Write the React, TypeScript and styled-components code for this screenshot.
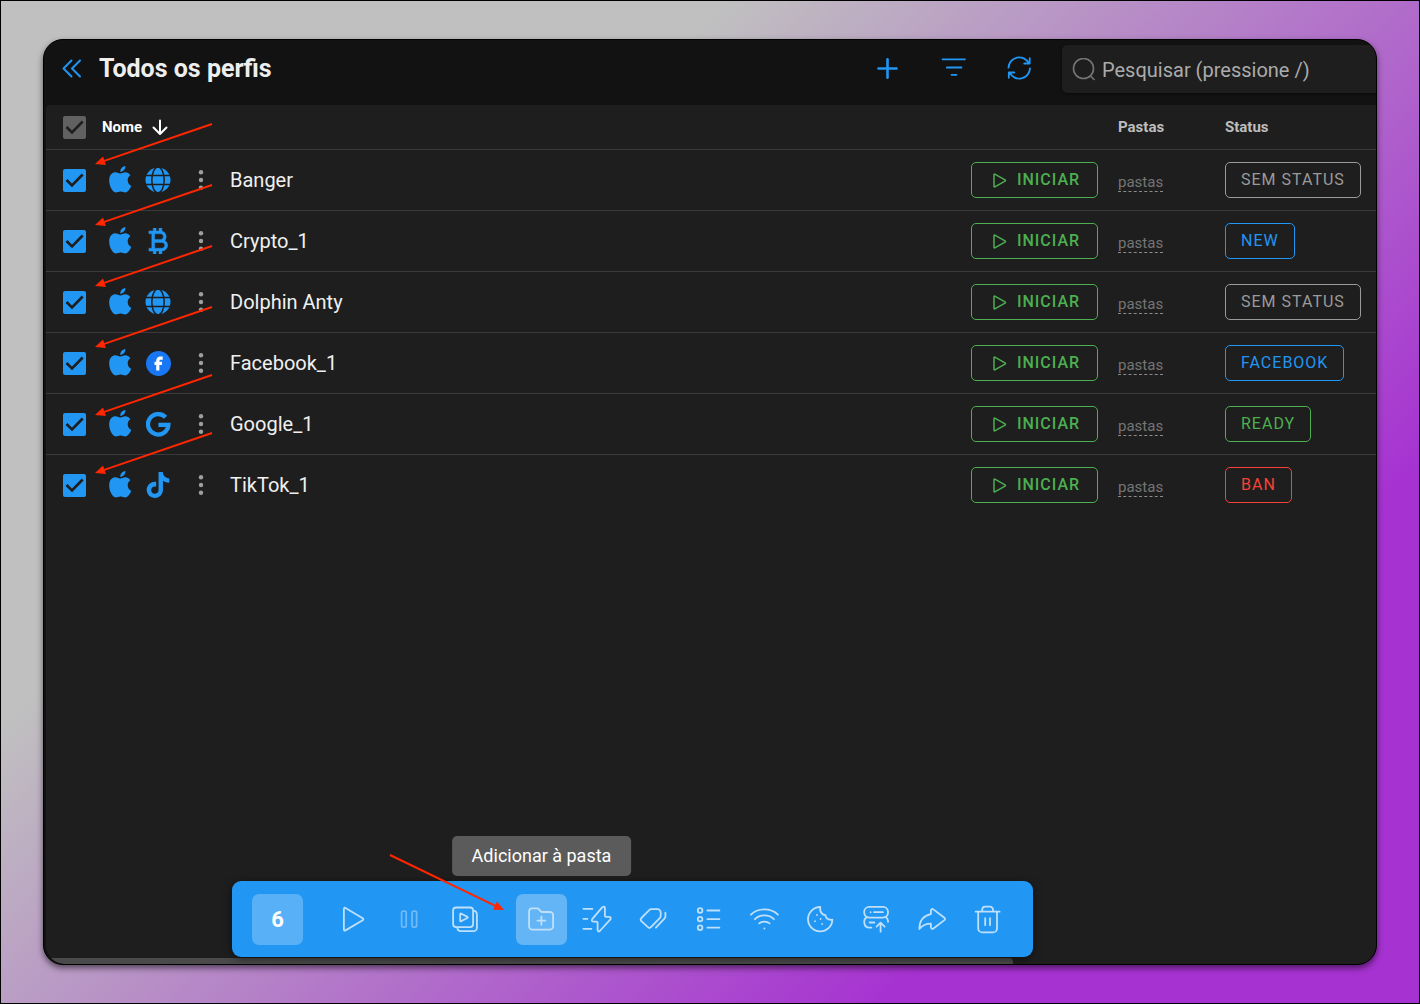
import React from "react";
import styled, { createGlobalStyle, css } from "styled-components";
import { SiTiktok } from "react-icons/si";

const BLUE = "#2196f3";
const GREEN = "#4caf50";
const RED = "#f44336";
const GREY = "#9a9a9a";
const SURFACE = "#1e1e1e";

const GlobalStyle = createGlobalStyle`
  * { box-sizing: border-box; }
  body {
    margin: 0;
    font-family: Roboto, "Liberation Sans", sans-serif;
    color: #f5f5f5;
  }
  button, input { font-family: inherit; }
`;

const Page = styled.div`
  display: flex;
  min-height: 100vh;
  padding: 38px 42px;
  border: 1px solid #000;
  background: linear-gradient(135deg, #c0c0c0 30%, #a632d1 78%);
`;

const Window = styled.main`
  position: relative;
  display: flex;
  flex-direction: column;
  flex: 1;
  min-width: 0;
  overflow: hidden;
  border: 1px solid #000;
  border-radius: 20px;
  background: #121212;
  box-shadow: 0 3px 6px rgba(0, 0, 0, 0.55);
`;

const Header = styled.header`
  display: flex;
  align-items: center;
  padding: 5px 0 12px 16px;
`;

const IconButton = styled.button`
  display: grid;
  place-items: center;
  width: 26px;
  height: 26px;
  padding: 0;
  border: 0;
  background: none;
  color: ${BLUE};
  cursor: pointer;
`;

const Title = styled.h1`
  flex: 1;
  margin: 0 0 0 13px;
  font-size: 25px;
  line-height: 30px;
  font-weight: 700;
  color: #eeeeee;
`;

const HeaderActions = styled.div`
  display: flex;
  gap: 40px;
  margin-right: 30px;
`;

const SearchField = styled.label`
  display: flex;
  align-items: center;
  gap: 7px;
  width: 314px;
  height: 48px;
  padding-left: 10px;
  border-radius: 5px 0 0 5px;
  background: ${SURFACE};
  color: #757575;
  box-shadow: 0 1px 3px rgba(0, 0, 0, 0.5);
`;

const SearchInput = styled.input`
  flex: 1;
  min-width: 0;
  padding: 2px 0 0;
  border: 0;
  outline: 0;
  background: none;
  color: #fff;
  font-size: 20px;
  line-height: 24px;
  &::placeholder { color: #ababab; opacity: 1; }
`;

const Content = styled.section`
  display: flex;
  flex-direction: column;
  justify-content: space-between;
  flex: 1;
  margin-left: 2px;
  border-radius: 4px 0 19px 19px;
  overflow: hidden;
  background: ${SURFACE};
`;

const Table = styled.table`
  width: 100%;
  table-layout: fixed;
  border-spacing: 0;
`;

const Col = styled.col<{ $w?: number }>`
  width: ${(p) => (p.$w ? `${p.$w}px` : "auto")};
`;

const HeadCell = styled.th<{ $strong?: boolean }>`
  height: 44px;
  padding: 0;
  text-align: left;
  font-size: 15px;
  line-height: 20px;
  font-weight: 700;
  color: ${(p) => (p.$strong ? "#ffffff" : "#bdbdbd")};
`;

const SortButton = styled.button`
  display: flex;
  align-items: center;
  gap: 9px;
  padding: 0;
  border: 0;
  background: none;
  color: inherit;
  font-size: inherit;
  font-weight: inherit;
`;

const Cell = styled.td`
  height: 61px;
  padding: 0;
  border-top: 1px solid #3a3a3a;
`;

const CheckLabel = styled.label`
  display: grid;
  width: 23px;
  margin-left: 17px;
  & > * { grid-area: 1 / 1; }
`;

const CheckInput = styled.input<{ $muted?: boolean }>`
  appearance: none;
  width: 23px;
  height: 23px;
  margin: 0;
  border-radius: 2px;
  background: ${(p) => (p.$muted ? "#616161" : BLUE)};
`;

const Profile = styled.div`
  display: flex;
  align-items: center;
  padding-left: 5px;
`;

const Brands = styled.div`
  display: flex;
  gap: 12px;
  margin-right: 17px;
  color: ${BLUE};
`;

const BrandBox = styled.span`
  display: grid;
  place-items: center;
  width: 26px;
  height: 30px;
`;

const MenuButton = styled(IconButton)`
  color: #9e9e9e;
`;

const ProfileName = styled.span`
  margin-left: 16px;
  font-size: 20px;
  line-height: 24px;
  color: #f0f0f0;
`;

const outlined = css`
  height: 36px;
  border: 1px solid currentColor;
  border-radius: 5px;
  background: none;
  font-size: 16px;
  line-height: 20px;
  letter-spacing: 1px;
  cursor: pointer;
`;

const StartButton = styled.button`
  ${outlined}
  display: flex;
  align-items: center;
  justify-content: center;
  gap: 10px;
  width: 127px;
  padding: 0 0 0 3px;
  font-weight: 500;
  color: ${GREEN};
`;

const StatusButton = styled.button<{ $color: string }>`
  ${outlined}
  padding: 0 15px;
  white-space: nowrap;
  color: ${(p) => p.$color};
`;

const FolderLink = styled.a`
  display: inline-block;
  margin-top: 4px;
  border-bottom: 1px dashed #8a8a8a;
  font-size: 15px;
  line-height: 18px;
  color: #757575;
  text-decoration: none;
`;

const ScrollThumb = styled.div`
  width: 967px;
  max-width: 73%;
  height: 6px;
  border-radius: 0 4px 0 0;
  background: #4a4a4a;
`;

const BulkBar = styled.div`
  position: absolute;
  left: 188px;
  bottom: 7px;
  display: flex;
  gap: 25px;
  padding: 13px 18px 12px 20px;
  border-radius: 9px;
  background: ${BLUE};
  box-shadow: 0 2px 8px rgba(0, 0, 0, 0.5);
`;

const Count = styled.output`
  display: grid;
  place-items: center;
  width: 51px;
  height: 51px;
  border-radius: 7px;
  background: rgba(255, 255, 255, 0.25);
  color: #fff;
  font-size: 22px;
  line-height: 26px;
  font-weight: 700;
`;

const BulkGroup = styled.div`
  display: flex;
  gap: 5px;
`;

const BulkButton = styled.button<{ $active?: boolean; $dim?: boolean }>`
  position: relative;
  display: grid;
  place-items: center;
  width: 51px;
  height: 51px;
  padding: 0;
  border: 0;
  border-radius: 7px;
  background: ${(p) => (p.$active ? "rgba(255, 255, 255, 0.3)" : "none")};
  color: ${(p) => (p.$dim ? "#6fbaf7" : "#bfe0fb")};
`;

const Tooltip = styled.span`
  position: absolute;
  left: 50%;
  bottom: calc(100% + 18px);
  transform: translateX(-50%);
  padding: 9px 20px;
  border-radius: 5px;
  background: #5b5b5b;
  color: #fff;
  font-size: 18px;
  line-height: 22px;
  white-space: nowrap;
`;

const Annotations = styled.svg`
  position: absolute;
  left: -44px;
  top: -40px;
  pointer-events: none;
`;

const Tick = () => (
  <svg width="23" height="23" viewBox="0 0 23 23" fill="none" stroke={SURFACE} strokeWidth="2.6" pointerEvents="none">
    <path d="M3.500 11 9 16.500 19.700 5.500" />
  </svg>
);

const Check = ({ label, muted }: { label: string; muted?: boolean }) => (
  <CheckLabel>
    <CheckInput type="checkbox" defaultChecked aria-label={label} $muted={muted} />
    <Tick />
  </CheckLabel>
);

const Apple = () => (
  <svg width="23" height="29" viewBox="0 0 23 29" fill={BLUE}>
    <path d="M11.300 7.600C9.500 7.400 8 6.200 6 6.300 2.500 6.600.2 9.800.2 14.500.2 19.500 3.200 26.200 6.800 26.400 8.600 26.400 9.400 25.400 11.600 25.400S14.600 26.400 16.200 26.400C19 26.300 21.300 22.600 22.300 19.800 17.800 17.800 17.600 11.500 21.400 9.200 20.200 7.400 18.200 6.300 16.200 6.300 14.200 6.300 12.800 7.600 11.300 7.600z" />
    <path d="M11.300 5.900C11 3 13.300.3 16.400 0 16.600 3 14.300 5.800 11.300 5.900z" />
  </svg>
);

const Globe = () => (
  <svg width="26" height="26" viewBox="0 0 26 26">
    <circle cx="13" cy="13" r="12.5" fill={BLUE} />
    <g fill="none" stroke={SURFACE} strokeWidth="1.5">
      <path d="M0 8.600H26M0 17.400H26" />
      <ellipse cx="13" cy="13" rx="6.2" ry="13" />
    </g>
  </svg>
);

const Bitcoin = () => (
  <svg width="20" height="26" viewBox="5.4 3 13.8 18" fill={BLUE} stroke={BLUE} strokeWidth="0.3">
    <path d="M17.060 11.570c.59-.69.94-1.590.94-2.570 0-1.860-1.270-3.430-3-3.870V3h-2v2h-2V3H9v2H6v2h2v10H6v2h3v2h2v-2h2v2h2v-2c2.210 0 4-1.790 4-4 0-1.450-.78-2.730-1.940-3.430zM10 7h4c1.100 0 2 .9 2 2s-.9 2-2 2h-4V7zm5 10h-5v-4h5c1.100 0 2 .9 2 2s-.9 2-2 2z" />
  </svg>
);

const Facebook = () => (
  <svg width="25" height="25" viewBox="0 0 25 25" fill="none">
    <circle cx="12.5" cy="12.5" r="12.5" fill="#1877f2" />
    <path d="M11.800 19.500V10.200q0-3 2.800-3H16.700M8.500 12.300H16" stroke="#fff" strokeWidth="3.2" />
  </svg>
);

const Google = () => (
  <svg width="25" height="25" viewBox="0 0 25 25" fill="none" stroke={BLUE} strokeWidth="4.3">
    <path d="M19.600 5.300A10.200 10.200 0 1 0 22.400 12.900H12.400" />
  </svg>
);

const LineIcon = ({ size = 26, stroke = 1.8, children }: { size?: number; stroke?: number; children: React.ReactNode }) => (
  <svg
    width={size}
    height={size}
    viewBox={`0 0 ${size} ${size}`}
    fill="none"
    stroke="currentColor"
    strokeWidth={stroke}
    strokeLinecap="round"
    strokeLinejoin="round"
  >
    {children}
  </svg>
);

const BulkIcon = ({ children }: { children: React.ReactNode }) => (
  <svg
    width="32"
    height="32"
    viewBox="0.6 0.8 32 32"
    fill="none"
    stroke="currentColor"
    strokeWidth="1.8"
    strokeLinecap="round"
    strokeLinejoin="round"
  >
    {children}
  </svg>
);

type Row = { name: string; site: React.ReactNode; status: string; color: string };

const rows: Row[] = [
  { name: "Banger", site: <Globe />, status: "SEM STATUS", color: GREY },
  { name: "Crypto_1", site: <Bitcoin />, status: "NEW", color: BLUE },
  { name: "Dolphin Anty", site: <Globe />, status: "SEM STATUS", color: GREY },
  { name: "Facebook_1", site: <Facebook />, status: "FACEBOOK", color: BLUE },
  { name: "Google_1", site: <Google />, status: "READY", color: GREEN },
  { name: "TikTok_1", site: <SiTiktok size={26} />, status: "BAN", color: RED },
];

const runIcons = [
  { label: "Iniciar", icon: <path d="M6.500 5.600V26.400q.2 1.600 1.600 .8L25.300 17q1.200-1 0-2L8.100 4.800q-1.400-.8-1.600 .8z" /> },
  {
    label: "Parar",
    dim: true,
    icon: (
      <>
        <rect x="8.200" y="8" width="4.600" height="16" rx="1.600" />
        <rect x="18.600" y="8" width="4.600" height="16" rx="1.600" />
      </>
    ),
  },
  {
    label: "Cenários",
    icon: (
      <>
        <rect x="3.700" y="4.300" width="20" height="19.600" rx="3" />
        <path d="M10.800 10.700V17.700q.1.700.8.400L18 14.800q.7-.6 0-1.100L11.600 10.300q-.7-.2-.8.400z" />
        <path d="M24 7.500c2 .3 3.500 1.500 3.500 4V24.500a3.500 3.500 0 0 1-3.500 3.500H11.500c-2.500 0-3.400-1.500-3.600-3.800" />
      </>
    ),
  },
];

const editIcons = [
  {
    label: "Adicionar à pasta",
    active: true,
    icon: (
      <path d="M6.700 5.200h5q1 0 1.700.8l1.900 2.200q.6.600 1.400.600h8a3 3 0 0 1 3 3V23.400a3 3 0 0 1-3 3H6.700a3 3 0 0 1-3-3V8.200a3 3 0 0 1 3-3zM16 13.500v8M12 17.500h8" />
    ),
  },
  {
    label: "Ações rápidas",
    icon: (
      <>
        <path d="M2 5.600H11M2 15.600H6M2 25.600H10" />
        <path d="M21 4 10.800 16q-1 2 1 2.400h3.200q1.200.1 1.200 1.200V27q.4 2.200 2.200.8L29 16.200q1-2-1-2.500h-3.300q-1.200 0-1.200-1.200V4.600q-.4-2-2.500-.6z" />
      </>
    ),
  },
  {
    label: "Etiquetas",
    icon: (
      <path d="M14 6H20a3.300 3.300 0 0 1 3.300 3.300V12.500q0 1.500-1 2.500L13.500 24q-1.500 1.500-3 0L4 18q-1.500-1.500 0-3.200L11.800 7q.8-1 2.200-1zM28 9.500V13q0 1.500-1 2.500L18.500 24.500" />
    ),
  },
  {
    label: "Status",
    icon: (
      <>
        <circle cx="6.700" cy="7.300" r="2.300" />
        <circle cx="6.700" cy="15.900" r="2.300" />
        <circle cx="6.700" cy="24.500" r="2.300" />
        <path d="M14 7.300H26M14 15.900H26M14 24.500H26" />
      </>
    ),
  },
  {
    label: "Proxy",
    icon: <path d="M1.500 11.500C8.500 4.500 21.500 4.500 28.500 11.500M5.500 16C10.500 11 19.500 11 24.500 16M9.800 20.200C12.500 17.800 17.500 17.800 20.200 20.200M15 25.300v.1" />,
  },
  {
    label: "Cookies",
    icon: (
      <path d="M14.800 3.800c-.4 4.200 1.400 7.500 5.200 8.200 .6 3.400 3 5 7 4.500A12.200 12.200 0 1 1 14.800 3.800zM11.500 11.800v.1M9.600 18v.1M15.200 15.700v.1M16.700 20.800v.1" />
    ),
  },
  {
    label: "Atualizar proxy",
    icon: (
      <>
        <rect x="2.800" y="3.600" width="23.800" height="10.800" rx="5" />
        <path d="M9.200 9v.1M12.600 9H21.500M5 14.400C1.500 16.800 2.200 24.500 8 24.500H10M8.200 19.300H13M25 14.400q1.600 1.500 1.700 4.300M19.200 28.500V20.500M15.200 23.500l4-4 4 4" />
      </>
    ),
  },
  {
    label: "Compartilhar",
    icon: (
      <path d="M13.500 11V7.500q.5-2.500 2.500-1.300L27 14.500q1.200 1.200 0 2.400L16 25.300q-2 1.200-2.500-1.200V20.500C9 20.500 5 22 2 25.800 2 18 6 12.500 13.500 11z" />
    ),
  },
  {
    label: "Excluir",
    icon: (
      <path d="M2.200 8.500H26.200M8.800 8.500V6.500a3 3 0 0 1 3-3h4.800a3 3 0 0 1 3 3V8.500M4.800 8.500V25.200a4 4 0 0 0 4 4H19.600a4 4 0 0 0 4-4V8.500M11.800 15V22M16.600 15V22" />
    ),
  },
];

/* [tailX, tailY, tipX, tipY] */
const arrows = [
  [212, 124, 95, 164],
  [212, 185, 95, 225],
  [212, 246, 95, 286],
  [212, 307, 95, 347],
  [212, 375, 95, 415],
  [212, 433, 95, 473],
  [390, 855, 504, 910],
];

const Arrow = ({ pts }: { pts: number[] }) => {
  const [x1, y1, x2, y2] = pts;
  const angle = (Math.atan2(y2 - y1, x2 - x1) * 180) / Math.PI;
  const len = Math.hypot(x2 - x1, y2 - y1);
  return (
    <g transform={`translate(${x2} ${y2}) rotate(${angle})`}>
      <path d={`M${-len} 0H-9`} stroke="#ff2600" strokeWidth="2" />
      <path d="M0 0-10-4.500V4.500z" fill="#ff2600" />
    </g>
  );
};

export default function App() {
  return (
    <Page>
      <GlobalStyle />
      <Window>
        <Header>
          <IconButton aria-label="Recolher">
            <LineIcon stroke={2}>
              <path d="M11.500 4.500 3.500 12.500l8 8M20 4.500 12 12.500l8 8" />
            </LineIcon>
          </IconButton>
          <Title>Todos os perfis</Title>
          <HeaderActions>
            <IconButton aria-label="Criar perfil">
              <LineIcon stroke={2.6}>
                <path d="M13.500 3.300V21.700M4.500 12.500H22.500" />
              </LineIcon>
            </IconButton>
            <IconButton aria-label="Filtrar">
              <LineIcon>
                <path d="M2.500 3.300H25M6.800 11.500H21.500M11.500 18.800H16.500" />
              </LineIcon>
            </IconButton>
            <IconButton aria-label="Atualizar">
              <LineIcon>
                <path d="M2.500 11.600A10.700 10.700 0 0 1 22.700 7.200M24 12.400A10.700 10.700 0 0 1 3.800 16.800M23.700 2.200V7.500H18.200M2.800 21.800V16.500H8.300" />
              </LineIcon>
            </IconButton>
          </HeaderActions>
          <SearchField>
            <LineIcon size={23} stroke={1.6}>
              <path d="M21.500 10.500A10 10 0 1 1 1.500 10.500 10 10 0 1 1 21.500 10.500M18.800 18.300 22 21.500" />
            </LineIcon>
            <SearchInput type="search" placeholder="Pesquisar (pressione /)" aria-label="Pesquisar" />
          </SearchField>
        </Header>

        <Content>
          <Table>
            <colgroup>
              <Col $w={56} />
              <Col />
              <Col $w={147} />
              <Col $w={107} />
              <Col $w={151} />
            </colgroup>
            <thead>
              <tr>
                <HeadCell>
                  <Check label="Selecionar todos" muted />
                </HeadCell>
                <HeadCell $strong>
                  <SortButton>
                    Nome
                    <LineIcon size={18} stroke={2}>
                      <path d="M9 2.500V15.500M2.500 9.500 9 16l6.500-6.500" />
                    </LineIcon>
                  </SortButton>
                </HeadCell>
                <HeadCell />
                <HeadCell>Pastas</HeadCell>
                <HeadCell>Status</HeadCell>
              </tr>
            </thead>
            <tbody>
              {rows.map((row) => (
                <tr key={row.name}>
                  <Cell>
                    <Check label={`Selecionar ${row.name}`} />
                  </Cell>
                  <Cell>
                    <Profile>
                      <Brands>
                        <BrandBox>
                          <Apple />
                        </BrandBox>
                        <BrandBox>{row.site}</BrandBox>
                      </Brands>
                      <MenuButton aria-label={`Opções de ${row.name}`}>
                        <svg width="6" height="22" viewBox="0 0 6 22" fill="currentColor">
                          <circle cx="3" cy="3.200" r="2.200" />
                          <circle cx="3" cy="11" r="2.200" />
                          <circle cx="3" cy="18.800" r="2.200" />
                        </svg>
                      </MenuButton>
                      <ProfileName>{row.name}</ProfileName>
                    </Profile>
                  </Cell>
                  <Cell>
                    <StartButton>
                      <LineIcon size={15} stroke={1.5}>
                        <path d="M2 1.500V13.500q.1.700.8.400L13 8.200q.9-.7 0-1.400L2.800 1.100q-.7-.3-.8.400z" />
                      </LineIcon>
                      INICIAR
                    </StartButton>
                  </Cell>
                  <Cell>
                    <FolderLink href="#pastas">pastas</FolderLink>
                  </Cell>
                  <Cell>
                    <StatusButton $color={row.color}>{row.status}</StatusButton>
                  </Cell>
                </tr>
              ))}
            </tbody>
          </Table>
          <ScrollThumb />
        </Content>

        <BulkBar role="toolbar" aria-label="Ações em massa">
          <Count>6</Count>
          <BulkGroup>
            {runIcons.map((item) => (
              <BulkButton key={item.label} aria-label={item.label} $dim={item.dim}>
                <BulkIcon>{item.icon}</BulkIcon>
              </BulkButton>
            ))}
          </BulkGroup>
          <BulkGroup>
            {editIcons.map((item) => (
              <BulkButton key={item.label} aria-label={item.label} $active={item.active}>
                <BulkIcon>{item.icon}</BulkIcon>
                {item.active && <Tooltip role="tooltip">{item.label}</Tooltip>}
              </BulkButton>
            ))}
          </BulkGroup>
        </BulkBar>

        <Annotations width="520" height="930" viewBox="0 0 520 930" aria-hidden="true">
          {arrows.map((pts) => (
            <Arrow key={pts.join()} pts={pts} />
          ))}
        </Annotations>
      </Window>
    </Page>
  );
}
